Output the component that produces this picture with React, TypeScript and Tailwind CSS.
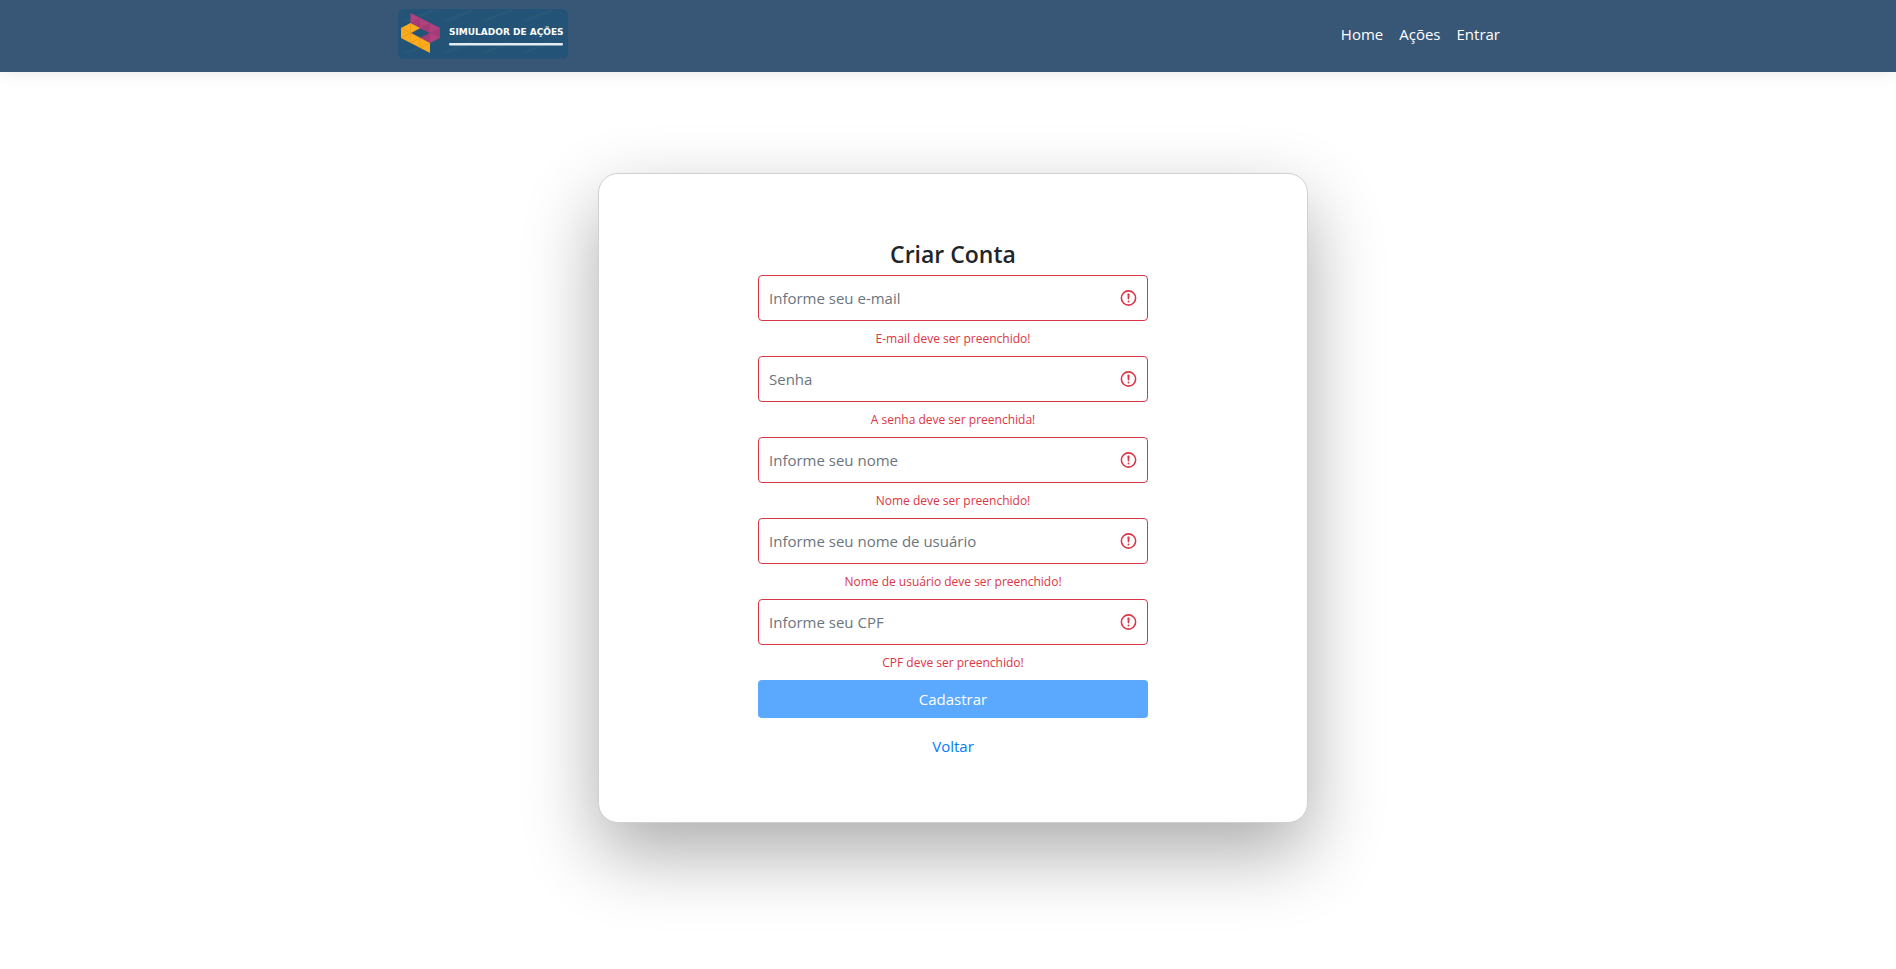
const fields = [
  { id: "email", type: "email", label: "Informe seu e-mail", error: "E-mail deve ser preenchido!" },
  { id: "senha", type: "password", label: "Senha", error: "A senha deve ser preenchida!" },
  { id: "nome", type: "text", label: "Informe seu nome", error: "Nome deve ser preenchido!" },
  { id: "usuario", type: "text", label: "Informe seu nome de usuário", error: "Nome de usuário deve ser preenchido!" },
  { id: "cpf", type: "text", label: "Informe seu CPF", error: "CPF deve ser preenchido!" },
];

function Logo() {
  return (
    <svg viewBox="0 0 170 50" className="block h-[50px] w-[170px]" role="img" aria-label="Simulador de Ações">
      <rect width="170" height="50" rx="6" fill="#235477" />
      <path
        d="M8 12 34 2M47 12 73 2M86 12 112 2M126 12 152 2M8 44 34 33M47 44 73 33M86 44 112 33M126 44 152 33"
        stroke="#305d7b"
        strokeWidth="3"
        strokeLinecap="round"
        opacity="0.4"
      />
      <path d="M12.500 4 42 19V29L32 34 22 29 32 24 12.500 14Z" fill="#b0417f" />
      <path d="M12.500 14 22 9V19ZM22 19 32 14V24ZM32 24 42 19V29ZM22 29 32 24V34Z" fill="#a23b76" />
      <path d="M12.500 14 22 19 13 24 32 34V44L3 29V19Z" fill="#fbab1c" />
      <path d="M3 19 22 29V39M12.500 14V34M3 29 22 19M12.500 34 22 29M22 39 32 34" fill="none" stroke="#e3941a" strokeWidth="0.600" />
      <text x="51" y="26" fontSize="9" fontWeight="700" fill="#fff" fontFamily="'DejaVu Sans', sans-serif">
        SIMULADOR DE AÇÕES
      </text>
      <rect x="51" y="34" width="114" height="2.500" rx="1" fill="#e4edf4" />
    </svg>
  );
}

function ErrorIcon() {
  return (
    <svg viewBox="0 0 12 12" className="pointer-events-none absolute right-2.5 top-1/2 size-[19px] -translate-y-1/2" fill="none" stroke="#dc3545" aria-hidden="true">
      <circle cx="6" cy="6" r="4.500" />
      <path d="M5.800 3.600h.4L6 6.500z" strokeLinejoin="round" />
      <circle cx="6" cy="8.200" r=".6" fill="#dc3545" stroke="none" />
    </svg>
  );
}

export default function App() {
  return (
    <div className="min-h-screen overflow-hidden bg-white font-['Open_Sans','Noto_Sans',sans-serif] text-[#212529]">
      <header className="h-[72px] bg-[#385675] pl-2.5 shadow-[0_2px_16px_rgba(0,0,0,0.08)]">
        <div className="mx-auto flex max-w-[1110px] items-start justify-between pt-[9px]">
          <a href="#home"><Logo /></a>
          <nav className="flex h-[50px] items-center text-[15px] leading-6 text-white">
            <a href="#home" className="px-2">Home</a>
            <a href="#acoes" className="px-2">Ações</a>
            <a href="#entrar" className="px-2">Entrar</a>
          </nav>
        </div>
      </header>
      <main className="pl-2.5 pt-[101px]">
        <section className="mx-auto max-w-[710px] rounded-[20px] border border-[#d0d0d0] bg-white px-4 py-16 shadow-[0_30px_75px_rgba(0,0,0,0.33)]">
          <form noValidate className="mx-auto max-w-[390px] text-center">
            <h1 className="mb-[5px] text-[23px] leading-8 font-semibold">Criar Conta</h1>
            {fields.map((f) => (
              <div key={f.id}>
                <div className="relative">
                  <input
                    id={f.id}
                    type={f.type}
                    aria-label={f.label}
                    aria-invalid="true"
                    aria-describedby={`${f.id}-erro`}
                    placeholder={f.label}
                    className="block h-[46px] w-full rounded border border-[#dc3545] bg-white pl-2.5 pr-10 text-[15px] placeholder:text-[#6c757d] placeholder:opacity-100"
                  />
                  <ErrorIcon />
                </div>
                <p id={`${f.id}-erro`} className="pb-2 pt-2 text-xs leading-[19px] text-[#dc3545]">{f.error}</p>
              </div>
            ))}
            <button type="submit" className="h-[38px] w-full rounded bg-[#5aa9ff] text-[15px] text-white">Cadastrar</button>
            <a href="#voltar" className="mt-4 inline-block text-[15px] leading-6 text-[#007bff]">Voltar</a>
          </form>
        </section>
      </main>
    </div>
  );
}
